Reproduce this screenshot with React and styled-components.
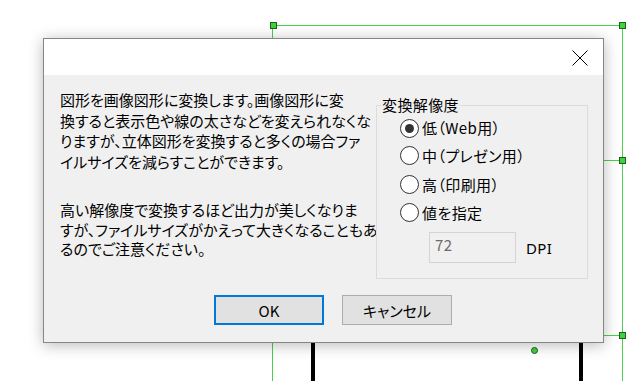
import React from "react";
import styled, { createGlobalStyle } from "styled-components";

const GlobalStyle = createGlobalStyle`
html, body {
  margin: 0;
  padding: 0;
  background: #ffffff;
}
body {
  font-family: "Noto Sans CJK JP", "Noto Sans", sans-serif;
  font-feature-settings: "palt";
}
`

const Canvas = styled.div`
position: relative;
width: 644px;
height: 381px;
overflow: hidden;
background: #fff;
`

// selection frame of the shape behind the dialog
const GreenLine = styled.div`
position: absolute;
background: #4ccf4c;
left: ${({ x }) => x}px;
top: ${({ y }) => y}px;
width: ${({ w }) => w || 1}px;
height: ${({ h }) => h || 1}px;
`

const Handle = styled.div`
position: absolute;
width: 5px;
height: 5px;
background: #3fd23f;
border: 1px solid #1c5e1c;
left: ${({ x }) => x - 3}px;
top: ${({ y }) => y - 3}px;
border-radius: ${({ round }) => round ? "50%" : "0"};
`

const Post = styled.div`
position: absolute;
top: 300px;
bottom: 0;
width: 4px;
background: #000;
left: ${({ x }) => x}px;
`

const Dialog = styled.div`
position: absolute;
left: 43px;
top: 38px;
width: 559px;
height: 303px;
border: 1px solid #868686;
background: #f0f0f0;
box-shadow: 0 2px 14px rgba(0, 0, 0, 0.28);
display: flex;
flex-direction: column;
`

const TitleBar = styled.div`
height: 36px;
background: #fff;
display: flex;
justify-content: flex-end;
align-items: center;
padding-right: 15px;
`

const CloseButton = styled.div`
width: 16px;
height: 16px;
display: flex;
margin-top: 1px;
`

const Body = styled.div`
flex: 1;
display: grid;
grid-template-columns: minmax(0, 1fr) 212px;
column-gap: 10px;
padding: 15px 15px 0 16px;
font-size: 15px;
line-height: 20px;
color: #000;
`

const Message = styled.div`
display: flex;
flex-direction: column;
gap: 28px;
white-space: nowrap;
letter-spacing: 0;
`

const Para = styled.p`
margin: 0;
line-height: ${({ lh }) => lh || 20}px;
`

const Group = styled.fieldset`
margin: 5px 0 0 0;
padding: 0 10px 11px 23px;
border: 1px solid #dcdcdc;
min-width: 0;
height: 184px;
box-sizing: border-box;
letter-spacing: 0.4px;
`

const Legend = styled.legend`
padding: 0 1px;
margin-left: -19px;
line-height: 20px;
`

const RadioRow = styled.div`
display: flex;
align-items: center;
height: ${({ h }) => h || 28}px;
gap: 3px;
`

const RadioCircle = styled.span`
width: 17px;
height: 17px;
border: 1px solid #333;
border-radius: 50%;
background: #fff;
display: flex;
align-items: center;
justify-content: center;
flex-shrink: 0;
&::after {
  content: "";
  width: 9px;
  height: 9px;
  border-radius: 50%;
  background: ${({ checked }) => checked ? "#333" : "transparent"};
}
`

const ValueRow = styled.div`
display: flex;
align-items: center;
margin: 6px 0 0 29px;
gap: 10px;
`

const ValueBox = styled.div`
width: 87px;
height: 31px;
border: 1px solid #d4d4d4;
color: #6d6d6d;
padding: 0 5px;
box-sizing: border-box;
display: flex;
align-items: center;
padding-bottom: 6px;
`

const Unit = styled.span`
font-family: "Noto Sans", sans-serif;
margin-top: 1px;
`

const Footer = styled.div`
display: flex;
justify-content: center;
gap: 18px;
padding: 0 0 17px 19px;
`

const Button = styled.div`
width: 110px;
height: 30px;
box-sizing: border-box;
background: #e1e1e1;
border: ${({ primary }) => primary ? "2px solid #0078d7" : "1px solid #adadad"};
display: flex;
align-items: center;
justify-content: center;
font-size: 15px;
color: #000;
`

const options = [
  { label: "低（Web用）", checked: true, h: 26 },
  { label: "中（プレゼン用）", h: 29 },
  { label: "高（印刷用）", h: 29 },
  { label: "値を指定", h: 27 },
];

const App = () => {
  return (
    <Canvas>
      <GlobalStyle />
      <GreenLine x={272} y={25} w={350} />
      <GreenLine x={272} y={25} h={356} />
      <GreenLine x={622} y={25} h={356} />
      <GreenLine x={580} y={160} w={42} />
      <GreenLine x={580} y={335} w={42} />
      <Post x={311} />
      <Post x={579} />
      <Handle x={273} y={25} />
      <Handle x={622} y={25} />
      <Handle x={622} y={160} />
      <Handle x={622} y={335} />
      <Handle x={534} y={350} round />

      <Dialog>
        <TitleBar>
          <CloseButton>
            <svg width="16" height="16" viewBox="0 0 16 16">
              <path d="M0.5 0.5 L15.5 15.5 M15.5 0.5 L0.5 15.5" stroke="#000" strokeWidth="1" fill="none" />
            </svg>
          </CloseButton>
        </TitleBar>
        <Body>
          <Message>
            <Para lh={20.5}>
              図形を画像図形に変換します。画像図形に変<br />
              換すると表示色や線の太さなどを変えられなくな<br />
              りますが、立体図形を変換すると多くの場合ファ<br />
              イルサイズを減らすことができます。
            </Para>
            <Para lh={19.5}>
              高い解像度で変換するほど出力が美しくなりま<br />
              すが、ファイルサイズがかえって大きくなることもあ<br />
              るのでご注意ください。
            </Para>
          </Message>
          <Group>
            <Legend>変換解像度</Legend>
            {options.map(o => (
              <RadioRow key={o.label} h={o.h}>
                <RadioCircle checked={o.checked} />
                <span>{o.label}</span>
              </RadioRow>
            ))}
            <ValueRow>
              <ValueBox>72</ValueBox>
              <Unit>DPI</Unit>
            </ValueRow>
          </Group>
        </Body>
        <Footer>
          <Button primary>OK</Button>
          <Button>キャンセル</Button>
        </Footer>
      </Dialog>
    </Canvas>
  );
};

export default App;
